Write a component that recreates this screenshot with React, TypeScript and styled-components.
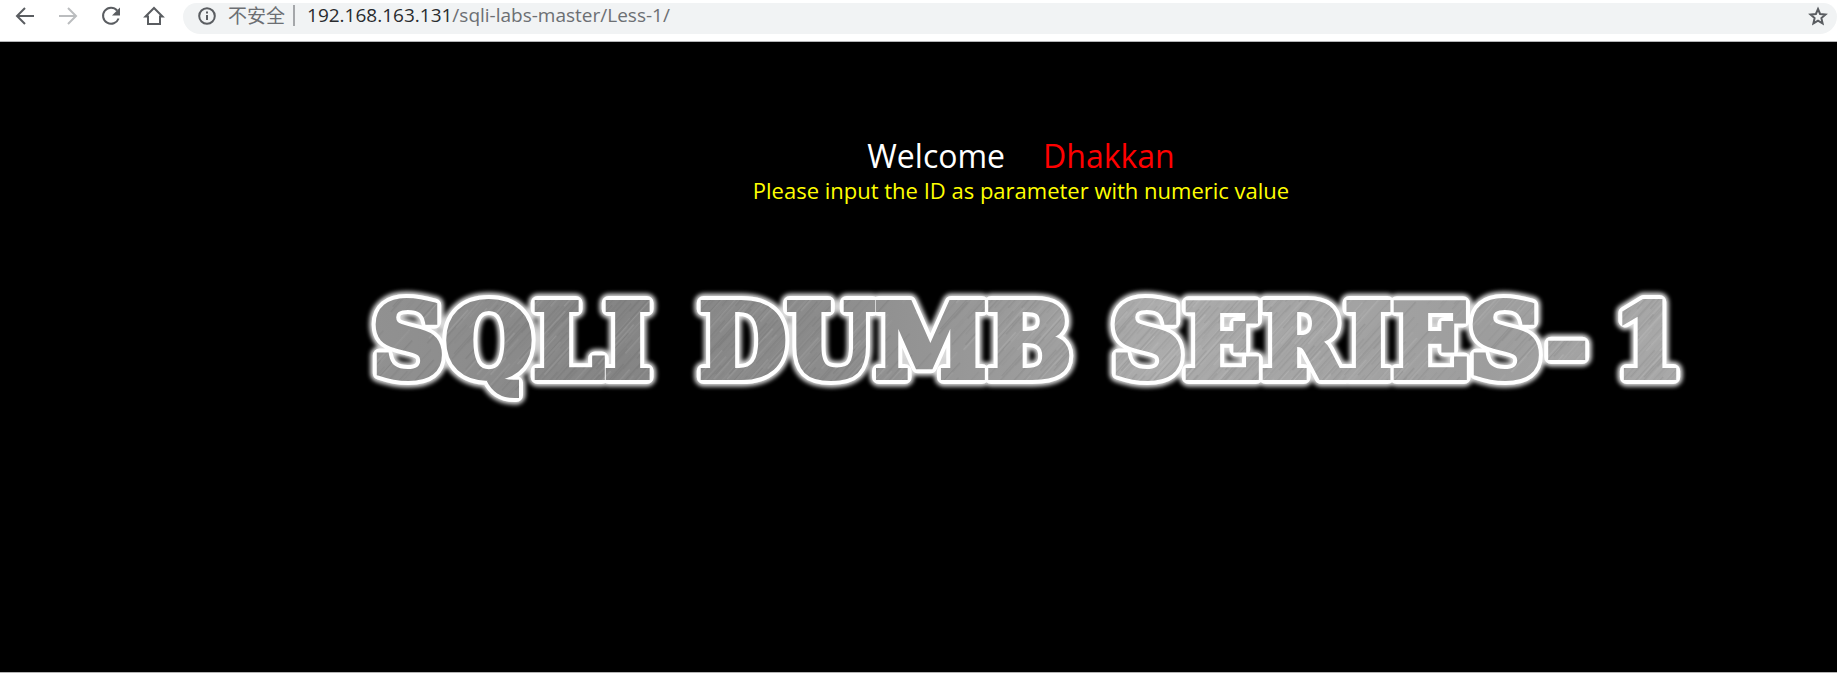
import React from "react";
import styled, { createGlobalStyle } from "styled-components";

const GlobalStyle = createGlobalStyle`
  * { box-sizing: border-box; }
  html, body, #root { height: 100%; }
  body {
    margin: 0;
    background: #fff;
    font-family: "Open Sans", "Noto Sans", "Noto Sans CJK SC", sans-serif;
  }
`;

const Window = styled.div`
  display: flex;
  flex-direction: column;
  min-height: 100%;
`;

const Toolbar = styled.header`
  display: flex;
  align-items: flex-start;
  padding: 3px 0 7px 13px;
  border-bottom: 1px solid #b4b5b7;
  background: #fff;
`;

const Nav = styled.nav`
  display: flex;
  gap: 19px;
  padding-right: 17px;
`;

const IconButton = styled.button<{ $muted?: boolean }>`
  display: flex;
  padding: 1px 0;
  border: 0;
  background: none;
  color: ${(p) => (p.$muted ? "#bbbdbf" : "#5a5d61")};
`;

const AddressBar = styled.div`
  flex: 1;
  display: flex;
  align-items: flex-start;
  height: 31px;
  padding: 0 7px 0 12px;
  border-radius: 14px 14px 18px 18px;
  background: #f1f3f4;
  color: #6c6f73;
  font-size: 19px;
  line-height: 24px;
`;

const Security = styled.span`
  padding-left: 9px;
  font-family: "Noto Sans CJK SC", sans-serif;
`;

const Divider = styled.span`
  width: 2px;
  height: 21px;
  margin: 2px 12px 0 8px;
  background: #a5a7aa;
`;

const Host = styled.label`
  color: #292b2e;
`;

const PathInput = styled.input`
  flex: 1;
  min-width: 0;
  height: 24px;
  padding: 0;
  border: 0;
  outline: 0;
  background: none;
  color: inherit;
  font: inherit;
`;

const Page = styled.main`
  flex: 1;
  display: flex;
  flex-direction: column;
  align-items: center;
  padding: 90px 0 0 205px;
  border-bottom: 1px solid #b4b4b4;
  background: #000;
`;

const Greeting = styled.p`
  display: flex;
  gap: 38px;
  margin: 0;
  color: #fff;
  font-size: 32px;
  line-height: 48px;
`;

const Name = styled.span`
  color: #f00;
`;

const Hint = styled.p`
  margin: 0;
  color: #ff0;
  font-size: 22px;
  line-height: 20px;
`;

const Banner = styled.h1`
  margin: 80px 0 0;
  line-height: 0;
`;

const BannerArt = styled.svg`
  font-family: "DejaVu Serif", serif;
  font-size: 101px;
  font-weight: bold;
`;

const streaks = Array.from({ length: 420 }, (_, i) => ({
  y: (i * 37) % 211,
  x: (i * 83) % 290,
  width: 20 + ((i * 29) % 60),
  light: i % 3 === 0,
  opacity: 0.03 + ((i * 7) % 5) * 0.02,
}));

function BannerTitle() {
  return (
    <Banner>
      <BannerArt width="1334" height="130" viewBox="0 0 1334 130">
        <defs>
          <filter id="halo" x="-2%" y="-20%" width="104%" height="140%">
            <feGaussianBlur stdDeviation="2" />
          </filter>
          <linearGradient id="steel" x1="0" x2="1334" y1="0" y2="0" gradientUnits="userSpaceOnUse">
            <stop offset="0" stopColor="#929292" />
            <stop offset="0.2" stopColor="#858585" />
            <stop offset="0.35" stopColor="#8c8c8c" />
            <stop offset="0.5" stopColor="#9c9c9c" />
            <stop offset="0.6" stopColor="#acacac" />
            <stop offset="0.85" stopColor="#9d9d9d" />
            <stop offset="1" stopColor="#aaaaaa" />
          </linearGradient>
          <pattern id="brushed" width="1334" height="130" patternUnits="userSpaceOnUse">
            <rect width="1334" height="130" fill="url(#steel)" />
            <rect width="1334" height="130" fill="url(#scratches)" />
          </pattern>
          <pattern
            id="scratches"
            width="350"
            height="211"
            patternUnits="userSpaceOnUse"
            patternTransform="rotate(-48)"
          >
            {streaks.map((s, i) => (
              <rect
                key={i}
                x={s.x}
                y={s.y}
                width={s.width}
                height="1.5"
                fill={s.light ? "#fff" : "#333"}
                opacity={s.opacity}
              />
            ))}
          </pattern>
        </defs>
        <use href="#title" fill="#fff" stroke="#fff" strokeWidth="19" strokeLinejoin="round" filter="url(#halo)" opacity="0.85" />
        <use href="#title" fill="none" stroke="#fff" strokeWidth="14" strokeLinejoin="round" />
        <g fill="url(#brushed)" stroke="url(#brushed)" strokeWidth="6">
          <g id="title">
            <text x="18" y="97">SQLI</text>
            <text x="345" y="97">DUMB</text>
            <text x="757" y="97">SERIES-</text>
            <text x="1259" y="97">1</text>
          </g>
        </g>
      </BannerArt>
    </Banner>
  );
}

const line = { fill: "none", stroke: "currentColor", strokeWidth: 2 };

export default function App() {
  return (
    <>
      <GlobalStyle />
      <Window>
        <Toolbar>
          <Nav aria-label="Browser">
            <IconButton aria-label="Back">
              <svg width="24" height="24" viewBox="0 0 24 24" {...line}>
                <path d="M21 12H5M12 4l-8 8 8 8" />
              </svg>
            </IconButton>
            <IconButton aria-label="Forward" $muted>
              <svg width="24" height="24" viewBox="0 0 24 24" {...line}>
                <path d="M3 12h16M12 4l8 8-8 8" />
              </svg>
            </IconButton>
            <IconButton aria-label="Reload">
              <svg width="24" height="24" viewBox="0 0 24 24" {...line}>
                <path d="M19.6 14.5a8 8 0 1 1-1.5-8" />
                <path d="M21 3.5v8h-8z" fill="currentColor" stroke="none" />
              </svg>
            </IconButton>
            <IconButton aria-label="Home">
              <svg width="24" height="24" viewBox="0 0 24 24" {...line}>
                <path d="M3.5 12.5 12 4l8.500 8.500H18V20H6v-7.500z" />
              </svg>
            </IconButton>
          </Nav>
          <AddressBar>
            <IconButton aria-label="Site information">
              <svg width="24" height="24" viewBox="0 0 24 24" {...line}>
                <circle cx="12" cy="12" r="7.800" />
                <path d="M12 11v5M12 7.500v2" />
              </svg>
            </IconButton>
            <Security>不安全</Security>
            <Divider />
            <Host htmlFor="path">192.168.163.131</Host>
            <PathInput id="path" defaultValue="/sqli-labs-master/Less-1/" />
            <IconButton aria-label="Bookmark">
              <svg width="24" height="24" viewBox="0 0 24 24" {...line}>
                <path d="m12 5 2.100 5 5.400.5-4.100 3.600 1.200 5.300-4.600-2.800-4.600 2.800 1.200-5.300-4.100-3.600 5.400-.5z" />
              </svg>
            </IconButton>
          </AddressBar>
        </Toolbar>
        <Page>
          <Greeting>
            <span>Welcome</span>
            <Name>Dhakkan</Name>
          </Greeting>
          <Hint>Please input the ID as parameter with numeric value</Hint>
          <BannerTitle />
        </Page>
      </Window>
    </>
  );
}
